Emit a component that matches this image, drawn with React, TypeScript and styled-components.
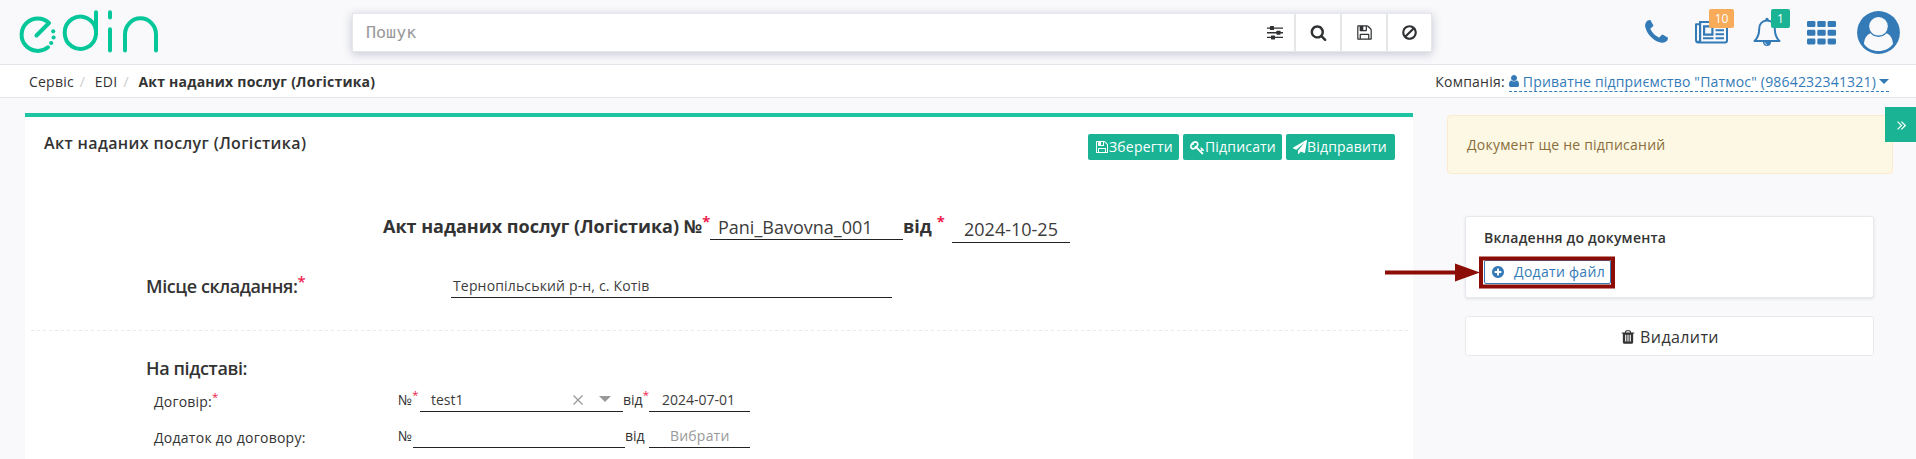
import React from 'react';
import styled, { createGlobalStyle } from 'styled-components';

const Global = createGlobalStyle`
  *, *::before, *::after { box-sizing: border-box; }
  html, body { margin: 0; padding: 0; }
  body {
    background: #f9f9fb;
    color: #333;
    font-family: "Open Sans", "Noto Sans", sans-serif;
    font-size: 14px;
    letter-spacing: 0.22px;
    line-height: 20px;
    overflow: hidden;
  }
  button { font-family: inherit; cursor: pointer; }
`;

const GLYPHS = {
  search:
    'M1216 832q0-185-131.5-316.5t-316.5-131.5-316.5 131.5-131.5 316.5 131.5 316.5 316.5 131.5 316.5-131.5 131.5-316.5zm512 832q0 52-38 90t-90 38q-54 0-90-38l-343-342q-179 124-399 124-143 0-273.5-55.5t-225-150-150-225-55.5-273.5 55.5-273.5 150-225 225-150 273.5-55.5 273.5 55.5 225 150 150 225 55.5 273.5q0 220-124 399l343 343q37 37 37 90z',
  save:
    'M512 1536h768v-384h-768v384zm896 0h128v-896q0-14-10-38.5t-20-34.5l-281-281q-10-10-34-20t-39-10v416q0 40-28 68t-68 28h-576q-40 0-68-28t-28-68v-416h-128v1280h128v-416q0-40 28-68t68-28h832q40 0 68 28t28 68v416zm-384-928v-320q0-13-9.5-22.5t-22.5-9.5h-192q-13 0-22.5 9.5t-9.5 22.5v320q0 13 9.5 22.5t22.5 9.5h192q13 0 22.5-9.5t9.5-22.5zm640 32v928q0 40-28 68t-68 28h-1344q-40 0-68-28t-28-68v-1344q0-40 28-68t68-28h928q40 0 88 20t76 48l280 280q28 28 48 76t20 88z',
  ban:
    'M1440 893q0-161-87-295l-754 753q137 89 297 89 111 0 211.5-43.5t173.5-116.5 116-174.5 43-212.5zm-999 299l755-754q-135-91-300-91-148 0-273 73t-198 199-73 274q0 162 89 299zm1223-299q0 157-61 300t-163.5 246-245 164-298.5 61-298.5-61-245-164-163.5-246-61-300 61-299.5 163.5-245.5 245-164 298.5-61 298.5 61 245 164 163.5 245.5 61 299.5z',
  phone:
    'M1600 1240q0 27-10 70.5t-21 68.5q-21 50-122 106-94 51-186 51-27 0-52.5-3.5t-57.5-12.5-47.5-14.5-55.5-20.5-49-18q-98-35-175-83-128-79-264.500-215.500t-215.500-264.500q-48-77-83-175-3-9-18-49t-20.500-55.500-14.500-47.500-12.500-57.500-3.500-52.500q0-92 51-186 56-101 106-122 25-11 68.500-21t70.500-10q14 0 21 3 18 6 53 76 11 19 30 54t35 63.500 31 53.500q3 4 17.500 25t21.500 35.500 7 28.500q0 20-28.500 50t-62 55-62 53-28.500 46q0 9 5 22.500t8.500 20.500 14 24 11.500 19q76 137 174 235t235 174q2 1 19 11.500t24 14 20.500 8.500 22.500 5q18 0 46-28.500t53-62 55-62 50-28.500q14 0 28.500 7t35.500 21.500 25 17.500q25 15 53.500 31t63.500 35 54 30q70 35 76 53 3 7 3 21z',
  user:
    'M1536 1399q0 109-62.5 187t-150.5 78h-854q-88 0-150.5-78t-62.5-187q0-85 8.5-160.5t31.5-152 58.5-131 94-89 134.5-34.5q131 128 313 128t313-128q76 0 134.5 34.5t94 89 58.5 131 31.5 152 8.5 160.5zm-256-887q0 159-112.5 271.5t-271.5 112.5-271.5-112.5-112.5-271.5 112.5-271.5 271.5-112.5 271.5 112.5 112.5 271.5z',
  plus:
    'M1344 960v-128q0-26-19-45t-45-19h-256v-256q0-26-19-45t-45-19h-128q-26 0-45 19t-19 45v256h-256q-26 0-45 19t-19 45v128q0 26 19 45t45 19h256v256q0 26 19 45t45 19h128q26 0 45-19t19-45v-256h256q26 0 45-19t19-45zm320-64q0 209-103 385.5t-279.5 279.5-385.5 103-385.5-103-279.5-279.5-103-385.5 103-385.5 279.5-279.5 385.5-103 385.5 103 279.5 279.5 103 385.5z',
  plane:
    'M1764 11q33 24 27 64l-256 1536q-5 29-32 45-14 8-31 8-11 0-24-5l-453-185-242 295q-18 23-49 23-13 0-22-4-19-7-30.5-23.5t-11.5-36.5v-349l864-1059-1069 925-395-162q-37-14-40-55-2-40 32-59l1664-960q15-9 32-9 20 0 36 11z',
  key:
    'M832 512q0-80-56-136t-136-56-136 56-56 136q0 42 19 83-41-19-83-19-80 0-136 56t-56 136 56 136 136 56 136-56 56-136q0-42-19-83 41 19 83 19 80 0 136-56t56-136zm851 704q0 17-49 66t-66 49q-9 0-28.5-16t-36.5-33-38.5-40-24.5-26l-96 96 220 220q28 28 28 68 0 42-39 81t-81 39q-40 0-68-28l-671-671q-176 131-365 131-163 0-265.5-102.5t-102.5-265.5q0-160 95-313t248-248 313-95q163 0 265.5 102.5t102.5 265.5q0 189-131 365l355 355 96-96q-3-3-26-24.5t-40-38.5-33-36.5-16-28.5q0-17 49-66t66-49q13 0 23 10 6 6 46 44.5t82 79.5 86.5 86 73 78 28.5 41z',
  trash:
    'M704 1376v-704q0-14-9-23t-23-9h-64q-14 0-23 9t-9 23v704q0 14 9 23t23 9h64q14 0 23-9t9-23zm256 0v-704q0-14-9-23t-23-9h-64q-14 0-23 9t-9 23v704q0 14 9 23t23 9h64q14 0 23-9t9-23zm256 0v-704q0-14-9-23t-23-9h-64q-14 0-23 9t-9 23v704q0 14 9 23t23 9h64q14 0 23-9t9-23zm-544-992h448l-48-117q-7-9-17-11h-317q-10 2-17 11zm928 32v64q0 14-9 23t-23 9h-96v948q0 83-47 143.5t-113 60.5h-832q-66 0-113-58.5t-47-141.5v-952h-96q-14 0-23-9t-9-23v-64q0-14 9-23t23-9h309l70-167q15-37 54-63t79-26h320q40 0 79 26t54 63l70 167h309q14 0 23 9t9 23z',
};

const Svg = styled.svg`
  display: block;
  flex: none;
  fill: currentColor;
`;

function Glyph({ name, size }: { name: keyof typeof GLYPHS; size: number }) {
  return (
    <Svg width={size} height={size} viewBox="0 0 1792 1792">
      <path d={GLYPHS[name]} />
    </Svg>
  );
}

/* ---------- header ---------- */

const Header = styled.header`
  display: flex;
  align-items: flex-start;
  height: 65px;
  border-bottom: 1px solid #e1e5ea;
`;

const Logo = styled.svg`
  flex: none;
  width: 142px;
  height: 44px;
  margin: 10px 192px 0 18px;
  fill: none;
  stroke: #05c79a;
  stroke-width: 4;
  stroke-linecap: round;
  stroke-linejoin: round;
`;

const SearchBar = styled.div`
  display: flex;
  width: 1080px;
  height: 39px;
  margin-top: 13px;
  background: #fff;
  border: 1px solid #e4e6ea;
  box-shadow: 0 2px 9px rgba(60, 70, 110, 0.28);
`;

const SearchText = styled.div`
  flex: 1;
  padding-left: 13px;
  font-family: "DejaVu Sans Mono", monospace;
  font-size: 16.7px;
  letter-spacing: 0;
  line-height: 36px;
  color: #999;
`;

const SearchButton = styled.div<{ $w: number; $plain?: boolean }>`
  display: flex;
  align-items: center;
  justify-content: center;
  width: ${(p) => p.$w}px;
  border-left: ${(p) => (p.$plain ? 'none' : '2px solid #e4e6e8')};
  color: #2f3133;
`;

const HeaderIcons = styled.nav`
  display: flex;
  align-items: flex-start;
  margin-left: auto;
  padding-right: 16px;
  color: #337ab7;
`;

const IconSlot = styled.div<{ $w: number; $top: number; $gap: number }>`
  position: relative;
  width: ${(p) => p.$w}px;
  margin-top: ${(p) => p.$top}px;
  margin-right: ${(p) => p.$gap}px;
`;

const Badge = styled.span<{ $w: number; $color: string; $left: number; $top: number }>`
  position: absolute;
  left: ${(p) => p.$left}px;
  top: ${(p) => p.$top}px;
  width: ${(p) => p.$w}px;
  height: 19px;
  border-radius: 2px;
  background: ${(p) => p.$color};
  color: #fff;
  font-size: 12px;
  font-weight: 500;
  letter-spacing: 0;
  line-height: 19px;
  text-align: center;
`;

/* ---------- breadcrumbs ---------- */

const CrumbBar = styled.div`
  display: flex;
  justify-content: space-between;
  height: 33px;
  padding: 0 27px 0 29px;
  background: #fff;
  border-bottom: 1px solid #e1e5ea;
  line-height: 33px;
`;

const Crumbs = styled.div`
  display: flex;
`;

const Separator = styled.span`
  width: 21px;
  padding-left: 6px;
  color: #ccc;
`;

const CurrentCrumb = styled.strong`
  font-weight: 700;
`;

const Company = styled.div`
  display: flex;
  gap: 4px;
`;

const CompanyLink = styled.a`
  display: flex;
  align-items: center;
  height: 27px;
  line-height: 33px;
  border-bottom: 1px dashed #337ab7;
  color: #337ab7;
  letter-spacing: 0.19px;

  span { height: 27px; margin-left: 4px; }
`;

const Caret = styled.i<{ $size: number; $color: string }>`
  width: 0;
  height: 0;
  border: ${(p) => p.$size}px solid transparent;
  border-top-color: ${(p) => p.$color};
  border-bottom: 0;
`;

const CompanyCaret = styled(Caret)`
  margin: 7px 0 0 3px;
`;

const UserMark = styled.div`
  width: 10px;
  display: flex;
  justify-content: center;
  margin-top: 6px;
`;

/* ---------- document panel ---------- */

const Main = styled.main`
  display: flex;
  align-items: flex-start;
  padding-left: 25px;
`;

const Panel = styled.section`
  width: 1388px;
  height: 346px;
  margin-top: 15px;
  background: #fff;
  border-top: 4px solid #1fc4a2;
`;

const PanelHead = styled.div`
  display: flex;
  justify-content: space-between;
  align-items: flex-start;
  height: 97px;
  padding: 0 18px 0 19px;
`;

const PanelTitle = styled.h5`
  margin: 13px 0 0;
  font-size: 16px;
  font-weight: 600;
  letter-spacing: 0.37px;
  line-height: 26px;
`;

const Actions = styled.div`
  display: flex;
  gap: 4px;
  margin-top: 17px;
`;

const ActionButton = styled.button<{ $w: number }>`
  display: flex;
  align-items: center;
  width: ${(p) => p.$w}px;
  height: 26px;
  padding: 0 0 0 7px;
  border: 0;
  border-radius: 2px;
  background: #1ab394;
  color: #fff;
  font-size: 14px;
  letter-spacing: 0.18px;
  line-height: 26px;
  white-space: nowrap;
`;

const FormRow = styled.div<{ $h: number; $left?: number }>`
  display: flex;
  align-items: flex-start;
  height: ${(p) => p.$h}px;
  padding-left: ${(p) => p.$left ?? 0}px;
  white-space: nowrap;
`;

const Label = styled.div<{ $w: number; $size?: number; $weight?: number; $top?: number; $track?: number }>`
  width: ${(p) => p.$w}px;
  margin-top: ${(p) => p.$top ?? 0}px;
  font-size: ${(p) => p.$size ?? 14}px;
  font-weight: ${(p) => p.$weight ?? 400};
  letter-spacing: ${(p) => p.$track ?? 0}px;
  line-height: 24px;
`;

const Star = styled.sup<{ $ml?: number }>`
  position: relative;
  top: -6px;
  margin-left: ${(p) => p.$ml ?? 0}px;
  color: #ed1c4b;
  font-size: 0.82em;
  line-height: 0;
  vertical-align: baseline;
`;

const Field = styled.div<{ $w: number; $h: number; $size?: number; $indent?: number; $muted?: boolean; $top?: number; $raise?: number; $track?: number }>`
  display: flex;
  align-items: center;
  width: ${(p) => p.$w}px;
  height: ${(p) => p.$h}px;
  margin-top: ${(p) => p.$top ?? 0}px;
  padding-left: ${(p) => p.$indent ?? 0}px;
  padding-bottom: ${(p) => p.$raise ?? 0}px;
  border-bottom: 1px solid #222;
  color: ${(p) => (p.$muted ? '#999' : '#3c3c3c')};
  font-size: ${(p) => p.$size ?? 14}px;
  letter-spacing: ${(p) => p.$track ?? 0}px;
  line-height: 20px;
`;

const ClearMark = styled.svg`
  margin: 0 16px 0 auto;
  width: 10px;
  height: 10px;
  stroke: #999;
  stroke-width: 1.3;
`;

const SelectCaret = styled(Caret)`
  margin: -2px 12px 0 0;
`;

const Divider = styled.hr`
  margin: 0 5px 0 6px;
  border: 0;
  height: 1px;
  background: repeating-linear-gradient(90deg, #e7eaec 0 3px, transparent 3px 6px);
`;

/* ---------- sidebar ---------- */

const Sidebar = styled.aside`
  position: relative;
  width: 446px;
  margin: 17px 0 0 34px;
`;

const Alert = styled.div`
  height: 59px;
  padding-left: 19px;
  border: 1px solid #faebcc;
  border-radius: 4px;
  background: #fcf8e3;
  color: #8a6d3b;
  line-height: 58px;
`;

const Collapse = styled.button`
  position: absolute;
  top: -8px;
  right: -23px;
  display: flex;
  align-items: center;
  justify-content: center;
  width: 31px;
  height: 35px;
  padding: 2px 0 0 2px;
  border: 0;
  background: #1ab394;
  color: #fff;
`;

const Attachments = styled.div`
  width: 409px;
  height: 82px;
  margin: 42px 0 0 18px;
  padding: 9px 0 0 18px;
  background: #fff;
  border: 1px solid #e7eaec;
  border-radius: 3px;
  box-shadow: 0 1px 3px rgba(80, 90, 110, 0.14);
`;

const AttachTitle = styled.div`
  font-weight: 600;
  line-height: 24px;
`;

const AddFile = styled.div`
  position: relative;
  display: flex;
  align-items: center;
  gap: 9px;
  width: 127px;
  height: 24px;
  margin-top: 10px;
  padding-left: 6px;
  border: 1px solid #337ab7;
  border-radius: 2px;
  color: #337ab7;
  letter-spacing: 0.3px;
  line-height: 22px;
`;

const Pointer = styled.svg`
  position: absolute;
  left: -100px;
  top: -5px;
  overflow: visible;
`;

const DeleteButton = styled.button`
  display: flex;
  align-items: center;
  justify-content: center;
  gap: 4px;
  width: 409px;
  height: 40px;
  margin: 18px 0 0 18px;
  padding: 2px 0 0;
  border: 1px solid #e7eaec;
  border-radius: 3px;
  background: #fff;
  color: #333;
  font-size: 16px;
  letter-spacing: 0.4px;
`;

function Newspaper() {
  return (
    <Svg width="33" height="24" viewBox="0 0 33 24">
      <path fillRule="evenodd" d="M4 1h27.500a1.500 1.500 0 0 1 1.500 1.500v18a3 3 0 0 1-3 3H3.500A3.500 3.500 0 0 1 0 20V4.200a1 1 0 0 1 1-1h3zM6.200 3v18a2 2 0 0 1-.2.500h24a1 1 0 0 0 1-1V3zM2 5.200V20a1 1 0 0 0 2 0V5.200z" />
      <path fillRule="evenodd" d="M8 5.200h10.500v10.500H8zM10.200 7.400v6.100h6.100V7.400z" />
      <path d="M8 17.300h10.500v1.900H8zM20.500 5.200H29v1.900h-8.500zM20.500 9.300H29v1.900h-8.500zM20.500 13.300H29v1.900h-8.500zM20.500 17.300H29v1.900h-8.500z" />
    </Svg>
  );
}

function Bell() {
  return (
    <Svg width="28" height="30" viewBox="0 0 28 30">
      <path
        d="M14 3.500c-4.800 0-7.800 3.600-7.800 8.200 0 6.500-1.600 9.500-4.700 12.300h25c-3.100-2.800-4.700-5.800-4.700-12.300 0-4.600-3-8.200-7.800-8.200z"
        fill="none"
        stroke="currentColor"
        strokeWidth="2"
        strokeLinejoin="round"
      />
      <circle cx="14" cy="2.400" r="1.700" />
      <path d="M10 25h8a4 4 0 0 1-8 0z" />
      <path d="M11.700 25.300a2.300 2.300 0 0 0 2.300 2.200" stroke="#f9f9fb" strokeWidth=".7" fill="none" />
    </Svg>
  );
}

function Grid() {
  return (
    <Svg width="29" height="24" viewBox="0 0 29 24">
      {[0, 8.7, 17.4].map((y) =>
        [0, 10.3, 20.6].map((x) => <rect key={x + '-' + y} x={x} y={y} width="8.400" height="6" rx="1.300" />)
      )}
    </Svg>
  );
}

function Avatar() {
  return (
    <Svg width="43" height="43" viewBox="0 0 43 43">
      <circle cx="21.500" cy="21.500" r="21.400" />
      <circle cx="21.500" cy="15.300" r="9.300" fill="#f9f9fb" />
      <path
        d="M13.500 22.300C9.500 24 7.400 27.500 7 33c3.300 4.400 8.500 7 14.500 7S32.700 37.400 36 33c-.4-5.500-2.500-9-6.500-10.700-2 2.300-4.800 3.600-8 3.600s-6-1.300-8-3.600z"
        fill="#f9f9fb"
      />
    </Svg>
  );
}

function Sliders() {
  return (
    <Svg width="16" height="14" viewBox="0 0 16 14">
      <path d="M0 1.400h16v1.300H0zM0 6.100h16v1.300H0zM0 10.800h16v1.300H0z" />
      <rect x="3" y="0" width="4" height="4" rx=".6" />
      <rect x="9.500" y="4.700" width="4" height="4" rx=".6" />
      <rect x="4" y="9.400" width="4" height="4" rx=".6" />
    </Svg>
  );
}

export default function App() {
  return (
    <>
      <Global />
      <Header>
        <Logo viewBox="18 10 142 44">
          <path d="M48 47.300A16.200 16.200 0 1 1 49 23L36.500 35.500" />
          <path d="M96 12.300V34.500A15.700 16.200 0 1 1 96 31" />
          <path d="M110 12.300V17.500M110 29.300V50.500M125 50.500V34.500a15.500 16.200 0 0 1 31 0V50.500" />
          <g fill="#05c79a" stroke="none">
            <circle cx="53.200" cy="31.300" r="2.100" />
            <circle cx="53.600" cy="37.500" r="2.100" />
            <circle cx="51.200" cy="43" r="2.100" />
          </g>
        </Logo>
        <SearchBar>
          <SearchText>Пошук</SearchText>
          <SearchButton $w={38} $plain><Sliders /></SearchButton>
          <SearchButton $w={46}><Glyph name="search" size={17} /></SearchButton>
          <SearchButton $w={46}><Glyph name="save" size={17} /></SearchButton>
          <SearchButton $w={45}><Glyph name="ban" size={17} /></SearchButton>
        </SearchBar>
        <HeaderIcons>
          <IconSlot $w={23} $top={18} $gap={30}><Glyph name="phone" size={29} /></IconSlot>
          <IconSlot $w={33} $top={20} $gap={25}>
            <Newspaper />
            <Badge $w={25} $left={14} $top={-11} $color="#f8ac59">10</Badge>
          </IconSlot>
          <IconSlot $w={28} $top={17} $gap={26}>
            <Bell />
            <Badge $w={19} $left={18} $top={-8} $color="#1ab394">1</Badge>
          </IconSlot>
          <IconSlot $w={29} $top={21} $gap={21}><Grid /></IconSlot>
          <IconSlot $w={43} $top={11} $gap={0}><Avatar /></IconSlot>
        </HeaderIcons>
      </Header>

      <CrumbBar>
        <Crumbs>
          <span>Сервіс</span>
          <Separator>/</Separator>
          <span>EDI</span>
          <Separator>/</Separator>
          <CurrentCrumb>Акт наданих послуг (Логістика)</CurrentCrumb>
        </Crumbs>
        <Company>
          Компанія:
          <CompanyLink>
            <UserMark><Glyph name="user" size={14} /></UserMark>
            <span>Приватне підприємство "Патмос" (9864232341321)</span>
            <CompanyCaret $size={5} $color="#337ab7" />
          </CompanyLink>
        </Company>
      </CrumbBar>

      <Main>
        <Panel>
          <PanelHead>
            <PanelTitle>Акт наданих послуг (Логістика)</PanelTitle>
            <Actions>
              <ActionButton $w={91}><Glyph name="save" size={14} />Зберегти</ActionButton>
              <ActionButton $w={99}><Glyph name="key" size={15} />Підписати</ActionButton>
              <ActionButton $w={109}><Glyph name="plane" size={14} />Відправити</ActionButton>
            </Actions>
          </PanelHead>

          <FormRow $h={60} $left={358}>
            <Label $w={327} $size={18} $weight={700}>Акт наданих послуг (Логістика) №<Star>*</Star></Label>
            <Field $w={193} $h={26} $size={18} $indent={8}>Pani_Bavovna_001</Field>
            <Label $w={49} $size={18} $weight={700}>від<Star $ml={5}>*</Star></Label>
            <Field $w={118} $h={26} $top={3} $size={18} $indent={12} $raise={2}>2024-10-25</Field>
          </FormRow>

          <FormRow $h={56} $left={121}>
            <Label $w={305} $size={18} $weight={600} $track={-0.42}>Місце складання:<Star>*</Star></Label>
            <Field $w={441} $h={24} $indent={2} $track={0.16}>Тернопільський р-н, с. Котів</Field>
          </FormRow>

          <Divider />

          <FormRow $h={57} $left={121} >
            <Label $w={305} $size={18} $weight={600} $top={25} $track={-0.38}>На підставі:</Label>
          </FormRow>

          <FormRow $h={36} $left={129}>
            <Label $w={244} $top={2} $track={0.2}>Договір:<Star>*</Star></Label>
            <Label $w={22}>№<Star>*</Star></Label>
            <Field $w={203} $h={24} $indent={11}>
              test1
              <ClearMark viewBox="0 0 10 10"><path d="M.5.5l9 9M9.500.5l-9 9" /></ClearMark>
              <SelectCaret $size={6} $color="#999" />
            </Field>
            <Label $w={26}>від<Star>*</Star></Label>
            <Field $w={101} $h={24} $indent={13}>2024-07-01</Field>
          </FormRow>

          <FormRow $h={30} $left={129}>
            <Label $w={244} $top={2} $track={0.26}>Додаток до договору:</Label>
            <Label $w={15}>№</Label>
            <Field $w={212} $h={24} />
            <Label $w={24}>від</Label>
            <Field $w={101} $h={24} $indent={21} $track={0.2} $muted>Вибрати</Field>
          </FormRow>
        </Panel>

        <Sidebar>
          <Alert>Документ ще не підписаний</Alert>
          <Collapse>
            <svg width="9" height="9" viewBox="0 0 9 9" fill="none" stroke="currentColor" strokeWidth="1.200">
              <path d="M.6.6l3.900 3.900L.6 8.400M4.400.6l3.900 3.900-3.900 3.900" />
            </svg>
          </Collapse>
          <Attachments>
            <AttachTitle>Вкладення до документа</AttachTitle>
            <AddFile>
              <Glyph name="plus" size={14} />
              Додати файл
              <Pointer width="234" height="33" viewBox="0 0 234 33">
                <path d="M0 16.500h73" stroke="#8b0d05" strokeWidth="4" />
                <path d="M70 7.500l25 9-25 9z" fill="#8b0d05" />
                <rect x="96" y="2.500" width="132" height="28" fill="none" stroke="#8b0d05" strokeWidth="4" />
              </Pointer>
            </AddFile>
          </Attachments>
          <DeleteButton><Glyph name="trash" size={16} />Видалити</DeleteButton>
        </Sidebar>
      </Main>
    </>
  );
}
